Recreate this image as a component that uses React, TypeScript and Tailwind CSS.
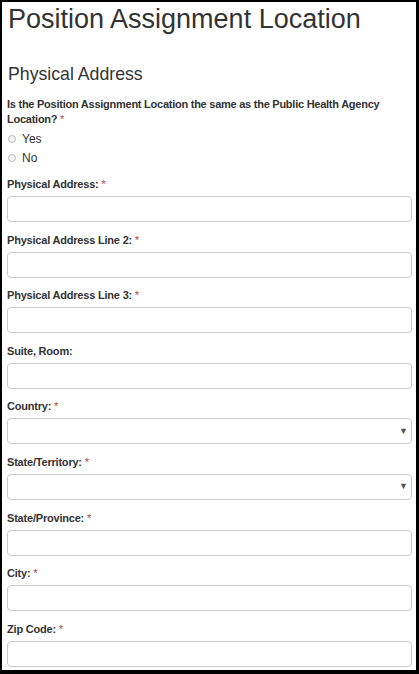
const fields: { label: string; required: boolean; select?: boolean }[] = [
    { label: "Physical Address:", required: true },
    { label: "Physical Address Line 2:", required: true },
    { label: "Physical Address Line 3:", required: true },
    { label: "Suite, Room:", required: false },
    { label: "Country:", required: true, select: true },
    { label: "State/Territory:", required: true, select: true },
    { label: "State/Province:", required: true },
    { label: "City:", required: true },
    { label: "Zip Code:", required: true },
]

function Star() {
    return <span className="text-[#a94442] font-normal"> *</span>
}

function Field({ label, required, select }: { label: string; required: boolean; select?: boolean }) {
    return (
        <div className="mb-[9.6px]">
            <label className="block text-[11px] leading-[17px] font-bold text-[#333] mb-[3px] tracking-[-0.2px]">
                {label}
                {required && <Star />}
            </label>
            <div className="h-[26px] border border-[#ccc] rounded-[4px] bg-white flex items-center justify-end pr-[3px]">
                {select && <span className="text-[9px] text-[#555]">▼</span>}
            </div>
        </div>
    )
}

function Radio({ text }: { text: string }) {
    return (
        <div className="flex items-center h-[19px]">
            <span className="w-[8px] h-[8px] rounded-full border border-[#bbb] bg-[#f4f4f4] ml-[1px] mr-[6px]" />
            <span className="text-[12px] text-[#333]">{text}</span>
        </div>
    )
}

function App() {
    return (
        <div className="w-[419px] h-[674px] bg-black overflow-hidden font-['Liberation_Sans',Arial,sans-serif]">
            <div className="ml-[2px] mt-[2px] w-[414px] h-[668px] bg-white overflow-hidden pl-[5px] pr-[4px]">
                <h1 className="text-[27px] leading-[32px] text-[#333] mt-[1px] ml-[1px]">Position Assignment Location</h1>
                <h2 className="text-[17.7px] leading-[22px] text-[#333] mt-[28px] ml-[1px]">Physical Address</h2>
                <p className="text-[11px] leading-[15px] font-bold text-[#333] mt-[12px] tracking-[-0.25px]">
                    Is the Position Assignment Location the same as the Public Health Agency Location?
                    <Star />
                </p>
                <div className="mt-[2px] mb-[9px]">
                    <Radio text="Yes" />
                    <Radio text="No" />
                </div>
                {fields.map((f) => (
                    <Field key={f.label} {...f} />
                ))}
            </div>
        </div>
    )
}

export default App
